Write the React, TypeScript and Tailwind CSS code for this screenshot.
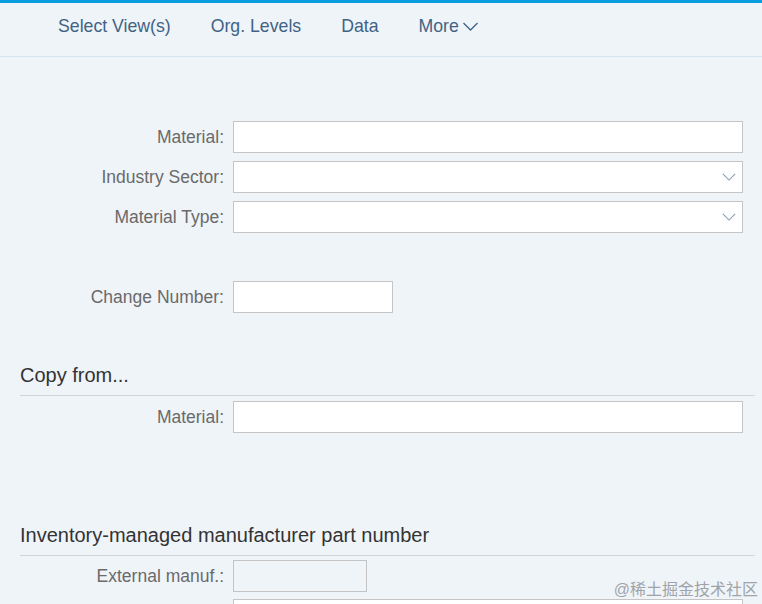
const font = { fontFamily: '"Liberation Sans", Arial, "Noto Sans CJK SC", sans-serif' };

function Chevron({ className }: { className: string }) {
  return (
    <svg viewBox="0 0 16 9" className={className} fill="none" stroke="currentColor" strokeWidth={1.3}>
      <polyline points="1,1 8,8 15,1" />
    </svg>
  );
}

function Label({ text }: { text: string }) {
  return (
    <div className="w-[225px] shrink-0 text-right text-[17.5px] text-[#6a6a6a] leading-8 pr-px">{text}</div>
  );
}

function Field({ label, width = "w-[510px]", select = false, disabled = false }: { label: string; width?: string; select?: boolean; disabled?: boolean }) {
  return (
    <div className="flex items-center h-8">
      <Label text={label} />
      <div
        className={`ml-2 h-8 ${width} border border-[#c4c4c4] ${disabled ? "bg-[#eff4f9]" : "bg-white"} flex items-center justify-end pr-[6px]`}
      >
        {select && <Chevron className="w-[14px] h-[8px] text-[#8aa0b6]" />}
      </div>
    </div>
  );
}

function Heading({ text }: { text: string }) {
  return (
    <div className="ml-5 mr-[7px] border-b border-[#d2d6da] pb-[9px] text-[20px] leading-[22px] text-[#333333]">
      {text}
    </div>
  );
}

export default function App() {
  return (
    <div style={font} className="relative w-[762px] h-[604px] overflow-hidden bg-[#eff4f9]">
      <div className="h-[3px] bg-[#0a9ee0]" />
      <div className="h-[54px] border-b border-[#d6e3ef] flex items-center pl-[58px] pb-[7px] gap-10 text-[17.7px] text-[#3f6385]">
        <span>Select View(s)</span>
        <span>Org. Levels</span>
        <span>Data</span>
        <span className="flex items-center gap-[3px]">
          More
          <Chevron className="w-[17px] h-[9px] text-[#3f6385] mt-[2px]" />
        </span>
      </div>

      <div className="pt-[64px] flex flex-col gap-2">
        <Field label="Material:" />
        <Field label="Industry Sector:" select />
        <Field label="Material Type:" select />
      </div>

      <div className="mt-12">
        <Field label="Change Number:" width="w-[160px]" />
      </div>

      <div className="mt-[51px]">
        <Heading text="Copy from..." />
        <div className="mt-[5px]">
          <Field label="Material:" />
        </div>
      </div>

      <div className="mt-[91px]">
        <Heading text="Inventory-managed manufacturer part number" />
        <div className="mt-[4px] flex flex-col gap-[7px]">
          <Field label="External manuf.:" width="w-[134px]" disabled />
          <Field label="" />
        </div>
      </div>

      <div className="absolute right-1 top-[578px] text-[16px] text-[#a0a4a8]">@稀土掘金技术社区</div>
    </div>
  );
}
